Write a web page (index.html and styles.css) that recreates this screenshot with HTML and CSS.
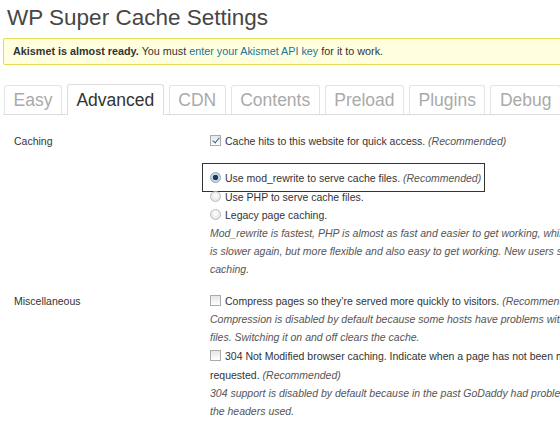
FILE: index.html
```html
<!DOCTYPE html>
<html>
<head>
<meta charset="utf-8">
<link rel="stylesheet" href="styles.css">
</head>
<body>
<div class="wrap">
  <h2 class="title">WP Super Cache Settings</h2>
  <div class="notice"><strong>Akismet is almost ready.</strong> You must <a href="#">enter your Akismet API key</a> for it to work.</div>
  <nav class="tabs">
    <a class="tab">Easy</a>
    <a class="tab active">Advanced</a>
    <a class="tab">CDN</a>
    <a class="tab">Contents</a>
    <a class="tab">Preload</a>
    <a class="tab">Plugins</a>
    <a class="tab">Debug</a>
  </nav>
  <div class="form">
    <div class="row">
      <div class="label">Caching</div>
      <div class="field">
        <div class="line"><span class="cb checked"></span>Cache hits to this website for quick access. <em>(Recommended)</em></div>
        <div class="spacer"></div>
        <div class="line tall"><span class="hl"><span class="rb on"></span>Use mod_rewrite to serve cache files. <em>(Recommended)</em></span></div>
        <div class="line"><span class="rb"></span>Use PHP to serve cache files.</div>
        <div class="line"><span class="rb"></span>Legacy page caching.</div>
        <div class="desc">Mod_rewrite is fastest, PHP is almost as fast and easier to get working, while legacy caching<br>is slower again, but more flexible and also easy to get working. New users should use PHP<br>caching.</div>
      </div>
    </div>
    <div class="row misc">
      <div class="label">Miscellaneous</div>
      <div class="field">
        <div class="line"><span class="cb"></span>Compress pages so they’re served more quickly to visitors. <em>(Recommended)</em></div>
        <div class="desc">Compression is disabled by default because some hosts have problems with compressed<br>files. Switching it on and off clears the cache.</div>
        <div class="line tall"><span class="cb"></span>304 Not Modified browser caching. Indicate when a page has not been modified since last</div>
        <div class="line">requested. <em>(Recommended)</em></div>
        <div class="desc">304 support is disabled by default because in the past GoDaddy had problems with some of<br>the headers used.</div>
      </div>
    </div>
  </div>
</div>
</body>
</html>
```
FILE: styles.css
```css
html, body {
  margin: 0;
  padding: 0;
  background: #fff;
  overflow: hidden;
}
body {
  font-family: "Liberation Sans", Arial, sans-serif;
  color: #333;
  width: 560px;
}
.wrap {
  padding: 0 0 0 3px;
  width: 700px;
}
.title {
  margin: 0;
  padding: 4px 0 0 4px;
  height: 33px;
  font-size: 22.5px;
  font-weight: normal;
  color: #464646;
  line-height: 28px;
}
.notice {
  background: #ffffe0;
  border: 1px solid #e6db55;
  border-radius: 2px;
  height: 25px;
  line-height: 25px;
  padding: 0 9px;
  font-size: 10.8px;
  color: #333;
  margin-top: 1px;
}
.notice strong {
  color: #333;
}
.notice a {
  color: #21759b;
  text-decoration: none;
}
.tabs {
  display: flex;
  gap: 5px;
  margin-top: 19px;
  padding-left: 1px;
  border-bottom: 1px solid #ddd;
  align-items: flex-end;
}
.tab {
  display: block;
  height: 28px;
  line-height: 28px;
  padding: 0 8.5px;
  font-size: 17.5px;
  color: #aaa;
  background: #fff;
  border: 1px solid #e4e4e4;
  border-bottom: none;
  border-radius: 3px 3px 0 0;
}
.tab.active {
  height: 30px;
  line-height: 30px;
  color: #333;
  border-color: #ddd;
  margin-bottom: -1px;
  position: relative;
}
.form {
  padding-top: 17px;
}
.row {
  display: flex;
}
.label {
  width: 196px;
  padding-left: 11px;
  font-size: 10.5px;
  line-height: 18px;
}
.field {
  font-size: 10.5px;
  line-height: 18px;
  white-space: nowrap;
}
.line {
  height: 18px;
  line-height: 18px;
}
.line.tall {
  height: 20px;
  line-height: 20px;
}
.spacer {
  height: 18px;
}
.desc {
  font-style: italic;
  color: #555;
}
em {
  color: #555;
}
.misc {
  margin-top: 14px;
}
.cb {
  display: inline-block;
  box-sizing: border-box;
  width: 11px;
  height: 11px;
  border: 1px solid #aaa;
  background: linear-gradient(#e6e6e6, #fff);
  margin: 0 4px 0 0;
  vertical-align: -1px;
  position: relative;
}
.cb.checked::after {
  content: "";
  position: absolute;
  left: 3px;
  top: 0px;
  width: 3px;
  height: 6px;
  border: solid #3a5f8a;
  border-width: 0 1.5px 1.5px 0;
  transform: rotate(40deg);
}
.rb {
  display: inline-block;
  box-sizing: border-box;
  width: 11px;
  height: 11px;
  border-radius: 50%;
  border: 1px solid #bbb;
  background: radial-gradient(circle at 50% 40%, #fff, #ddd);
  margin: 0 4px 0 0;
  vertical-align: -1px;
  position: relative;
}
.rb.on {
  border-color: #8aa;
  background: radial-gradient(circle at 50% 50%, #1d3a5e 0 2.5px, #c5d6e4 3px);
}
.hl {
  display: inline-block;
  position: relative;
}
.hl::before {
  content: "";
  position: absolute;
  left: -8px;
  right: -4px;
  top: -5px;
  bottom: -4px;
  border: 1.5px solid #333;
  pointer-events: none;
}
```
